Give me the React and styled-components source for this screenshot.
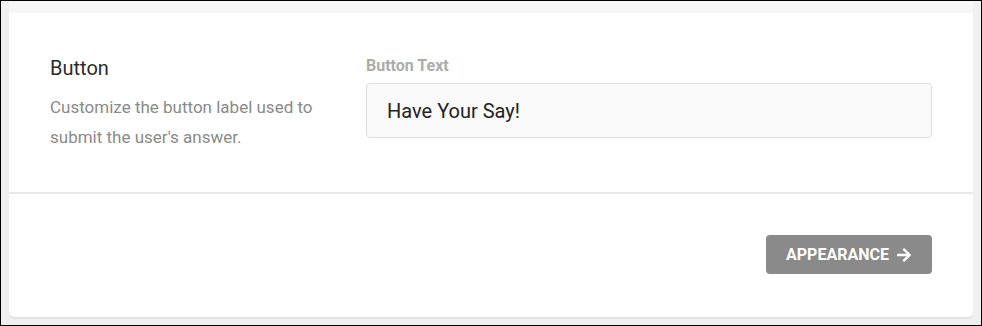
import styled, { createGlobalStyle } from "styled-components";
import { FaArrowRight } from "react-icons/fa";

const GlobalStyle = createGlobalStyle`
  * {
    box-sizing: border-box;
  }
  body {
    margin: 0;
    font-family: Roboto, "Liberation Sans", sans-serif;
    background: #f0f0f0;
  }
`;

const Frame = styled.div`
  width: 982px;
  height: 326px;
  border: 1px solid #000;
  background: #f0f0f0;
  padding: 0 8px 8px;
  display: flex;
  flex-direction: column;
`;

const PrevSection = styled.div`
  height: 12px;
  background: #f7f7f7;
`;

const Card = styled.div`
  flex: 1;
  background: #fff;
  border-radius: 0 0 5px 5px;
  box-shadow: 0 2px 1px rgba(0, 0, 0, 0.06);
  display: flex;
  flex-direction: column;
`;

const FieldRow = styled.div`
  display: grid;
  grid-template-columns: 290px 1fr;
  column-gap: 26px;
  padding: 42px 41px 0;
  height: 181px;
  border-bottom: 2px solid #e8e8e8;
`;

const Info = styled.div`
  display: flex;
  flex-direction: column;
  padding-top: 1px;
`;

const Title = styled.h3`
  margin: 0;
  font-size: 20px;
  line-height: 24px;
  font-weight: 400;
  color: #2b2b2b;
`;

const Description = styled.p`
  margin: 12px 0 0;
  font-size: 17px;
  line-height: 30px;
  color: #8a8a8a;
`;

const Field = styled.label`
  display: flex;
  flex-direction: column;
  gap: 8px;
  padding-top: 2px;
`;

const FieldLabel = styled.span`
  font-size: 16px;
  line-height: 18px;
  font-weight: 700;
  color: #acacac;
`;

const TextInput = styled.input`
  height: 55px;
  width: 100%;
  border: 1px solid #dddddd;
  border-radius: 4px;
  background: #fafafa;
  padding: 0 20px;
  font-family: inherit;
  font-size: 20px;
  color: #222;
  outline: none;
`;

const Footer = styled.div`
  flex: 1;
  display: flex;
  justify-content: flex-end;
  align-items: flex-start;
  padding: 41px 41px 0;
`;

const NextButton = styled.button`
  height: 39px;
  width: 166px;
  border: none;
  border-radius: 4px;
  background: #8a8a8a;
  color: #fff;
  font-family: inherit;
  font-size: 16px;
  font-weight: 700;
  text-transform: uppercase;
  display: flex;
  align-items: center;
  justify-content: center;
  gap: 7px;
  cursor: pointer;

  svg {
    font-size: 16px;
  }
`;

export default function App() {
  return (
    <>
      <GlobalStyle />
      <Frame>
        <PrevSection />
        <Card>
          <FieldRow>
            <Info>
              <Title>Button</Title>
              <Description>
                Customize the button label used to submit the user's answer.
              </Description>
            </Info>
            <Field>
              <FieldLabel>Button Text</FieldLabel>
              <TextInput defaultValue="Have Your Say!" />
            </Field>
          </FieldRow>
          <Footer>
            <NextButton>
              Appearance <FaArrowRight />
            </NextButton>
          </Footer>
        </Card>
      </Frame>
    </>
  );
}
